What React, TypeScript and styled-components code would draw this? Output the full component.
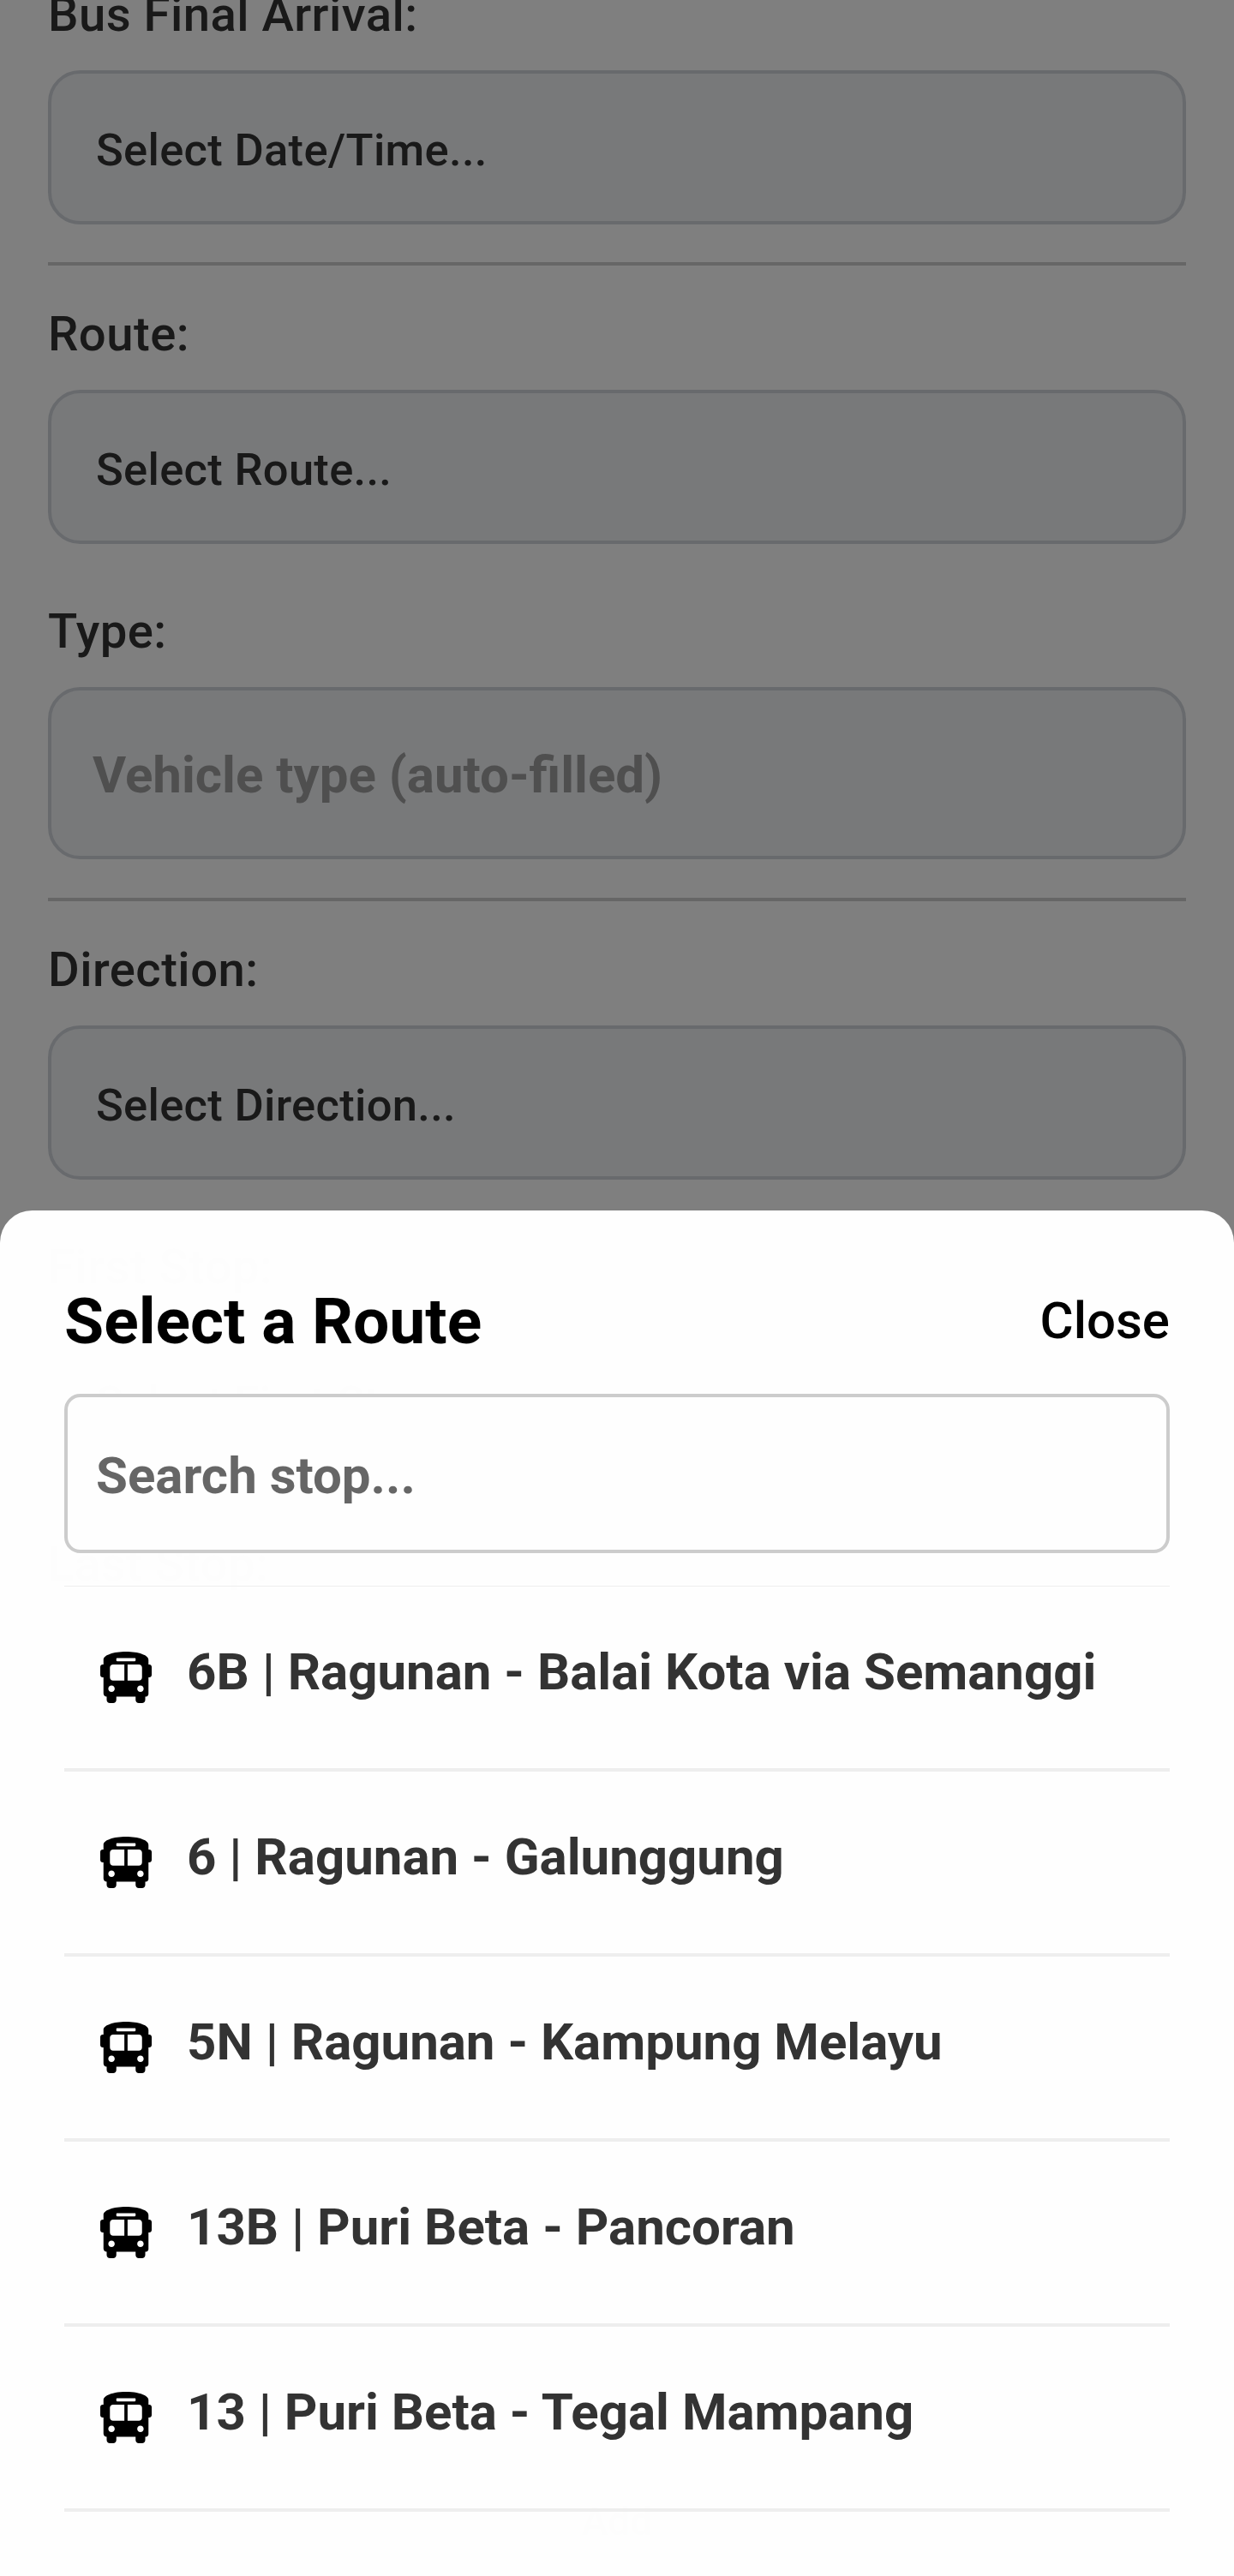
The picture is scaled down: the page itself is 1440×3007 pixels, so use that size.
import React from "react";
import styled, { createGlobalStyle } from "styled-components";
import { FaBusAlt } from "react-icons/fa";

const GlobalStyle = createGlobalStyle`
  *, *::before, *::after { box-sizing: border-box; }
  body {
    margin: 0;
    background: #ffffff;
    font-family: Roboto, "Liberation Sans", sans-serif;
  }
`;

const Screen = styled.main`
  position: relative;
  height: 3007px;
  overflow: hidden;
  background: #ffffff;
`;

const Form = styled.form`
  display: flex;
  flex-direction: column;
  gap: 69px;
  height: 2987px;
  margin-top: -16px;
  padding: 0 56px;
`;

const Section = styled.div<{ $divided?: boolean; $auto?: boolean }>`
  display: flex;
  flex-direction: column;
  ${({ $divided, $auto }) =>
    $divided &&
    `
    padding-bottom: ${$auto ? 45 : 44}px;
    border-bottom: 4px solid #cccccc;
    margin-bottom: -22px;
  `}
`;

const Label = styled.div`
  margin-bottom: 32px;
  color: #333333;
  font-size: 56.25px;
  font-weight: 500;
  line-height: 66px;
  letter-spacing: 0.45px;
`;

const Field = styled.div<{ $auto?: boolean }>`
  display: flex;
  align-items: center;
  height: ${({ $auto }) => ($auto ? 201 : 180)}px;
  padding: 5px ${({ $auto }) => ($auto ? 48 : 52)}px 0;
  border: 4px solid #d1d5db;
  border-radius: 37.5px;
  background: #f0f2f5;
  color: ${({ $auto }) => ($auto ? "#9e9e9e" : "#333333")};
  font-size: ${({ $auto }) => ($auto ? 60 : 52.5)}px;
  font-weight: ${({ $auto }) => ($auto ? 700 : 500)};
  line-height: 70px;
  letter-spacing: ${({ $auto }) => ($auto ? 0 : 0.3)}px;
  white-space: nowrap;
`;

const SubmitLabel = styled.div`
  margin-top: auto;
  color: #333333;
  font-size: 46px;
  font-weight: 500;
  line-height: 56px;
  text-align: center;
`;

const Backdrop = styled.div`
  position: absolute;
  inset: 0;
  display: flex;
  flex-direction: column;
  justify-content: flex-end;
  background: rgba(0, 0, 0, 0.5);
`;

const Sheet = styled.section`
  height: 1594px;
  padding: 85px 75px 75px;
  border-radius: 37.5px 37.5px 0 0;
  background: rgba(255, 255, 255, 0.994);
`;

const SheetHeader = styled.header`
  display: flex;
  align-items: center;
  justify-content: space-between;
  margin-bottom: 41px;
`;

const Title = styled.h1`
  margin: 0;
  color: #000000;
  font-size: 75px;
  font-weight: 700;
  line-height: 88px;
`;

const CloseButton = styled.button`
  margin: 0;
  padding: 0;
  border: 0;
  background: none;
  color: #000000;
  font: 500 60px/70px Roboto, "Liberation Sans", sans-serif;
`;

const SearchBox = styled.div`
  display: flex;
  align-items: center;
  height: 186px;
  margin-bottom: 38px;
  padding: 5px 33px 0;
  border: 4px solid #cccccc;
  border-radius: 18.75px;
  background: #fefefe;
  color: #666666;
  font-size: 60px;
  font-weight: 700;
  line-height: 70px;
`;

const RouteList = styled.ul`
  margin: 0;
  padding: 0;
  border-top: 1px solid #eeeeee;
  list-style: none;
`;

const RouteRow = styled.li`
  display: flex;
  align-items: center;
  gap: 41px;
  height: 216px;
  padding: 0 42px;
  border-bottom: 4px solid #eeeeee;
`;

const BusIcon = styled(FaBusAlt)`
  flex: none;
  width: 60px;
  height: 60px;
  color: #000000;
`;

const RouteName = styled.span`
  padding-bottom: 12px;
  color: #333333;
  font-size: 60px;
  font-weight: 700;
  line-height: 70px;
  white-space: nowrap;
`;

const fields = [
  { label: "Bus Final Arrival:", value: "Select Date/Time...", divided: true },
  { label: "Route:", value: "Select Route..." },
  { label: "Type:", value: "Vehicle type (auto-filled)", divided: true, auto: true },
  { label: "Direction:", value: "Select Direction..." },
  { label: "First Stop:", value: "Select First Stop..." },
  { label: "Last Stop:", value: "" },
];

const routes = [
  "6B | Ragunan - Balai Kota via Semanggi",
  "6 | Ragunan - Galunggung",
  "5N | Ragunan - Kampung Melayu",
  "13B | Puri Beta - Pancoran",
  "13 | Puri Beta - Tegal Mampang",
];

export default function App() {
  return (
    <>
      <GlobalStyle />
      <Screen>
        <Form>
          {fields.map(({ label, value, divided, auto }) => (
            <Section key={label} $divided={divided} $auto={auto}>
              <Label>{label}</Label>
              <Field $auto={auto}>{value}</Field>
            </Section>
          ))}
          <SubmitLabel>Add</SubmitLabel>
        </Form>
        <Backdrop>
          <Sheet>
            <SheetHeader>
              <Title>Select a Route</Title>
              <CloseButton type="button">Close</CloseButton>
            </SheetHeader>
            <SearchBox>Search stop...</SearchBox>
            <RouteList>
              {routes.map((name) => (
                <RouteRow key={name}>
                  <BusIcon />
                  <RouteName>{name}</RouteName>
                </RouteRow>
              ))}
            </RouteList>
          </Sheet>
        </Backdrop>
      </Screen>
    </>
  );
}
